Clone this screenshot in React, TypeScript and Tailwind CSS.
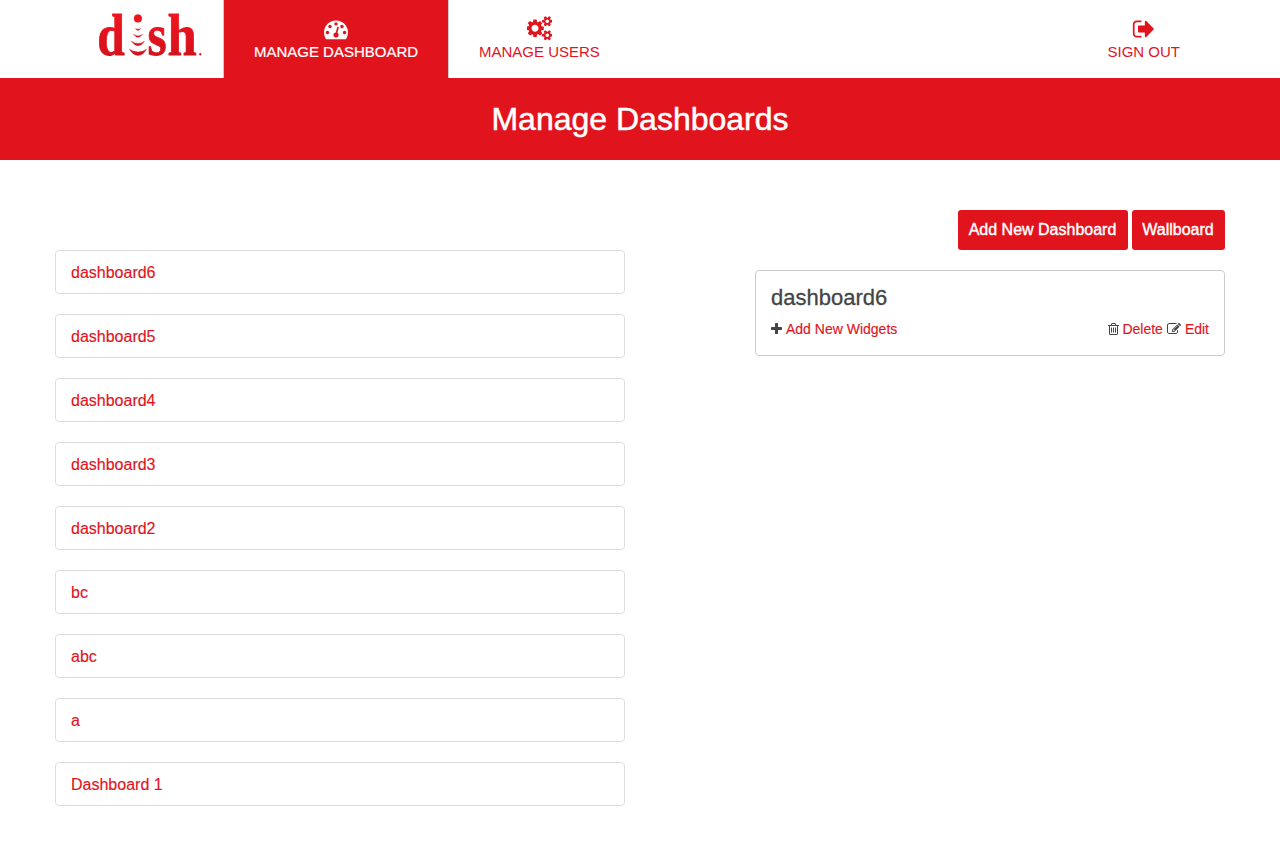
import type { ReactNode } from "react";

const PATHS = {
  tachometer:
    "M384 1152q0-53-37.5-90.5t-90.5-37.5-90.5 37.5-37.5 90.5 37.5 90.5 90.5 37.5 90.5-37.5 37.5-90.5zm192-448q0-53-37.5-90.5t-90.5-37.5-90.5 37.5-37.5 90.5 37.5 90.5 90.5 37.5 90.5-37.5 37.5-90.5zm428 481l101-382q6-26-7.5-48.5t-38.5-29.5-48 6.5-30 39.5l-101 382q-60 5-107 43.5t-63 98.5q-20 77 20 146t117 89 146-20 89-117q16-60-6-117t-72-91zm660-33q0-53-37.5-90.5t-90.5-37.5-90.5 37.5-37.5 90.5 37.5 90.5 90.5 37.5 90.5-37.5 37.5-90.5zm-640-640q0-53-37.5-90.5t-90.5-37.5-90.5 37.5-37.5 90.5 37.5 90.5 90.5 37.5 90.5-37.5 37.5-90.5zm448 192q0-53-37.5-90.5t-90.5-37.5-90.5 37.5-37.5 90.5 37.5 90.5 90.5 37.5 90.5-37.5 37.5-90.5zm320 448q0 261-141 483-19 29-54 29h-1402q-35 0-54-29-141-221-141-483 0-182 71-348t191-286 286-191 348-71 348 71 286 191 191 286 71 348z",
  cogs: "M832 896q0-106-75-181t-181-75-181 75-75 181 75 181 181 75 181-75 75-181zm768 512q0-52-38-90t-90-38-90 38-38 90q0 53 37.5 90.5t90.5 37.5 90.5-37.5 37.5-90.5zm0-1024q0-52-38-90t-90-38-90 38-38 90q0 53 37.5 90.5t90.5 37.5 90.5-37.5 37.5-90.5zm-384 421v185q0 10-7 19.5t-16 10.5l-155 24q-11 35-32 76 34 48 90 115 7 11 7 20 0 12-7 19-23 30-82.5 89.5t-78.5 59.5q-11 0-21-7l-115-90q-37 19-77 31-11 108-23 155-7 24-30 24h-186q-11 0-20-7.5t-10-17.5l-23-153q-34-10-75-31l-118 89q-7 7-20 7-11 0-21-8-144-133-144-160 0-9 7-19 10-14 41-53t47-61q-23-44-35-82l-152-24q-10-1-17-9.5t-7-19.5v-185q0-10 7-19.5t16-10.5l155-24q11-35 32-76-34-48-90-115-7-11-7-20 0-12 7-20 22-30 82-89t79-59q11 0 21 7l115 90q34-18 77-32 11-108 23-154 7-24 30-24h186q11 0 20 7.5t10 17.5l23 153q34 10 75 31l118-89q8-7 20-7 11 0 21 8 144 133 144 160 0 8-7 19-12 16-42 54t-45 60q23 48 34 82l152 23q10 2 17 10.5t7 19.5zm640 533v140q0 16-149 31-12 27-30 52 51 113 51 138 0 4-4 7-122 71-124 71-8 0-46-47t-52-68q-20 2-30 2t-30-2q-14 21-52 68t-46 47q-2 0-124-71-4-3-4-7 0-25 51-138-18-25-30-52-149-15-149-31v-140q0-16 149-31 13-29 30-52-51-113-51-138 0-4 4-7 4-2 35-20t59-34 30-16q8 0 46 46.5t52 67.5q20-2 30-2t30 2q51-71 92-112l6-2q4 0 124 70 4 3 4 7 0 25-51 138 17 23 30 52 149 15 149 31zm0-1024v140q0 16-149 31-12 27-30 52 51 113 51 138 0 4-4 7-122 71-124 71-8 0-46-47t-52-68q-20 2-30 2t-30-2q-14 21-52 68t-46 47q-2 0-124-71-4-3-4-7 0-25 51-138-18-25-30-52-149-15-149-31v-140q0-16 149-31 13-29 30-52-51-113-51-138 0-4 4-7 4-2 35-20t59-34 30-16q8 0 46 46.5t52 67.5q20-2 30-2t30 2q51-71 92-112l6-2q4 0 124 70 4 3 4 7 0 25-51 138 17 23 30 52 149 15 149 31z",
  signOut:
    "M704 1440q0 4 1 20t.5 26.5-3 23.5-10 19.5-20.5 6.5h-320q-119 0-203.5-84.5t-84.5-203.5v-704q0-119 84.5-203.5t203.5-84.5h320q13 0 22.5 9.5t9.5 22.5q0 4 1 20t.5 26.5-3 23.5-10 19.5-20.5 6.5h-320q-66 0-113 47t-47 113v704q0 66 47 113t113 47h312l11.5 1 11.5 3 8 5.5 7 9 2 13.5zm928-544q0 26-19 45l-544 544q-19 19-45 19t-45-19-19-45v-288h-448q-26 0-45-19t-19-45v-384q0-26 19-45t45-19h448v-288q0-26 19-45t45-19 45 19l544 544q19 19 19 45z",
  plus: "M1600 736v192q0 40-28 68t-68 28h-416v416q0 40-28 68t-68 28h-192q-40 0-68-28t-28-68v-416h-416q-40 0-68-28t-28-68v-192q0-40 28-68t68-28h416v-416q0-40 28-68t68-28h192q40 0 68 28t28 68v416h416q40 0 68 28t28 68z",
  trash:
    "M704 736v576q0 14-9 23t-23 9h-64q-14 0-23-9t-9-23v-576q0-14 9-23t23-9h64q14 0 23 9t9 23zm256 0v576q0 14-9 23t-23 9h-64q-14 0-23-9t-9-23v-576q0-14 9-23t23-9h64q14 0 23 9t9 23zm256 0v576q0 14-9 23t-23 9h-64q-14 0-23-9t-9-23v-576q0-14 9-23t23-9h64q14 0 23 9t9 23zm128 724v-948h-896v948q0 22 7 40.5t14.5 27 10.5 8.5h832q3 0 10.5-8.5t14.5-27 7-40.5zm-672-1076h448l-48-117q-7-9-17-11h-317q-10 2-17 11zm928 32v64q0 14-9 23t-23 9h-96v948q0 83-47 143.5t-113 60.5h-832q-66 0-113-58.5t-47-141.5v-952h-96q-14 0-23-9t-9-23v-64q0-14 9-23t23-9h309l70-167q15-37 54-63t79-26h320q40 0 79 26t54 63l70 167h309q14 0 23 9t9 23z",
  edit: "M888 1184l116-116-152-152-116 116v56h96v96h56zm440-720q-16-16-33 1l-350 350q-17 17-1 33t33-1l350-350q17-17 1-33zm80 594v190q0 119-84.5 203.5t-203.5 84.5h-832q-119 0-203.5-84.5t-84.5-203.5v-832q0-119 84.5-203.5t203.5-84.5h832q63 0 117 25 15 7 18 23 3 17-9 29l-49 49q-14 14-32 8-23-6-45-6h-832q-66 0-113 47t-47 113v832q0 66 47 113t113 47h832q66 0 113-47t47-113v-126q0-13 9-22l64-64q15-15 35-7t20 29zm-96-738l288 288-672 672h-288v-288zm444 132l-92 92-288-288 92-92q28-28 68-28t68 28l152 152q28 28 28 68t-28 68z",
};

function Icon({ name, viewBox, className }: { name: keyof typeof PATHS; viewBox: string; className: string }) {
  return (
    <svg viewBox={viewBox} className={`block shrink-0 fill-current ${className}`} aria-hidden="true">
      <path d={PATHS[name]} />
    </svg>
  );
}

function Logo() {
  return (
    <svg width="108" height="78" viewBox="96 0 108 78" className="block" role="img">
      <defs>
        <linearGradient id="logo-red" gradientUnits="userSpaceOnUse" x1="0" y1="14" x2="0" y2="56">
          <stop offset="0" stopColor="#f0141f" />
          <stop offset="1" stopColor="#d4121c" />
        </linearGradient>
      </defs>
      <g
        fill="url(#logo-red)"
        stroke="url(#logo-red)"
        strokeWidth="0.8"
        fontFamily="'Liberation Serif', serif"
        fontWeight="700"
        fontSize="60"
      >
        <text x="97.3" y="55.2" textLength="27.5" lengthAdjust="spacingAndGlyphs">d</text>
        <text x="147.5" y="55.2" textLength="19.2" lengthAdjust="spacingAndGlyphs">s</text>
        <text x="167.6" y="55.2" textLength="29.2" lengthAdjust="spacingAndGlyphs">h</text>
      </g>
      <g fill="url(#logo-red)" stroke="url(#logo-red)" strokeWidth="0.4" strokeLinejoin="round">
        <circle cx="137.9" cy="18.4" r="3.9" />
        <path d="M135.5 28.5Q138 30 140.5 28.5Q138 32.4 135.5 28.5Z" />
        <path d="M133.5 34.2Q138 37.6 142.5 34.2Q138 40.4 133.5 34.2Z" />
        <path d="M131.5 41.2Q138 46 144.5 41.2Q138 50.4 131.5 41.2Z" />
        <path d="M129.5 49.2Q138 55 146.6 49.2Q143 55.4 138 55.4Q133 55.4 129.5 49.2Z" />
        <circle cx="200.3" cy="54.3" r="1" />
      </g>
    </svg>
  );
}

function NavItem({ label, active, children }: { label: string; active?: boolean; children: ReactNode }) {
  return (
    <a
      className={`flex h-[78px] flex-col items-center pt-4 text-[15px] leading-5 ${
        active
          ? "w-[226px] border-x border-[#ccc] bg-[#e1141e] px-[29px] text-white [-webkit-text-stroke:0.2px]"
          : "px-[30px] text-[#e1141e]"
      }`}
    >
      <span className="flex h-[26px] items-start">{children}</span>
      <span className="whitespace-nowrap">{label}</span>
    </a>
  );
}

const dashboards = ["dashboard6", "dashboard5", "dashboard4", "dashboard3", "dashboard2", "bc", "abc", "a", "Dashboard 1"];

export default function App() {
  return (
    <div className="min-h-[846px] bg-white font-['Liberation_Sans',Arial,sans-serif] text-base text-[#444]">
      <header className="flex h-[78px] items-start pl-24 pr-[70px]">
        <div className="mr-[19px]">
          <Logo />
        </div>
        <nav className="flex flex-1">
          <NavItem label="MANAGE DASHBOARD" active>
            <Icon name="tachometer" viewBox="0 0 1792 1792" className="mt-[0.5px] size-6" />
          </NavItem>
          <NavItem label="MANAGE USERS">
            <Icon name="cogs" viewBox="0 0 1856 1792" className="h-[24.5px] w-[25.7px]" />
          </NavItem>
          <div className="ml-auto">
            <NavItem label="SIGN OUT">
              <Icon name="signOut" viewBox="0 0 1664 1792" className="mr-px mt-[0.5px] h-6 w-[22.3px]" />
            </NavItem>
          </div>
        </nav>
      </header>
      <h1 className="flex h-[82px] items-center justify-center bg-[#e1141e] text-[32px] text-white [-webkit-text-stroke:0.5px]">
        Manage Dashboards
      </h1>
      <main className="flex justify-between px-[55px] pt-[50px]">
        <ul className="mt-10 flex w-[570px] flex-col gap-5">
          {dashboards.map((name) => (
            <li
              key={name}
              className="flex h-11 items-center rounded border border-[#ddd] px-[15px] pt-0.5 text-[#e1141e] [-webkit-text-stroke:0.15px]"
            >
              {name}
            </li>
          ))}
        </ul>
        <section className="w-[470px]">
          <div className="flex justify-end gap-1 text-white [-webkit-text-stroke:0.4px]">
            <button className="h-10 w-[170px] rounded-[3px] bg-[#e1141e] pr-px">Add New Dashboard</button>
            <button className="h-10 w-[93px] rounded-[3px] bg-[#e1141e] pr-px">Wallboard</button>
          </div>
          <div className="mt-5 h-[86px] rounded border border-[#ccc] px-[15px] pt-3">
            <h2 className="text-[22px] leading-[30px] [-webkit-text-stroke:0.3px]">dashboard6</h2>
            <div className="mt-1.5 flex items-center justify-between text-sm leading-5">
              <div className="flex items-center gap-1">
                <Icon name="plus" viewBox="192 0 1408 1792" className="h-3.5 w-[11px]" />
                <a className="text-[#e1141e] [-webkit-text-stroke:0.15px]">Add New Widgets</a>
              </div>
              <div className="flex items-center gap-1">
                <Icon name="trash" viewBox="192 0 1408 1792" className="-mr-[0.6px] h-3.5 w-[11px]" />
                <a className="text-[#e1141e] [-webkit-text-stroke:0.15px]">Delete</a>
                <Icon name="edit" viewBox="0 0 1792 1792" className="size-3.5" />
                <a className="text-[#e1141e] [-webkit-text-stroke:0.15px]">Edit</a>
              </div>
            </div>
          </div>
        </section>
      </main>
    </div>
  );
}
